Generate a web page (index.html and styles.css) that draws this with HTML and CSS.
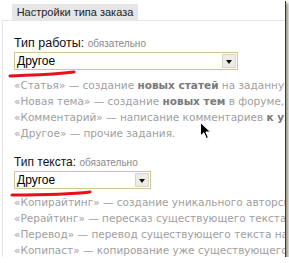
FILE: index.html
```html
<!DOCTYPE html>
<html lang="ru">
<head>
    <meta charset="UTF-8">
    <title>Настройки типа заказа</title>
    <link rel="stylesheet" href="styles.css">
</head>
<body>
    <div class="frame">
        <div class="tabs">
            <div class="tab">Настройки типа заказа</div>
        </div>
        <div class="panel">
            <div class="field">
                <label class="label">Тип работы: <span class="req">обязательно</span></label>
                <div class="select wide">
                    <span class="value">Другое</span>
                    <span class="arrow"></span>
                </div>
                <div class="help">
                    <div>«Статья» — создание <b>новых статей</b> на заданную тему по ключевым словам</div>
                    <div>«Новая тема» — создание <b>новых тем</b> в форуме, блоге</div>
                    <div>«Комментарий» — написание комментариев <b>к уже существующим</b> темам</div>
                    <div>«Другое» — прочие задания.</div>
                </div>
            </div>
            <div class="field second">
                <label class="label small">Тип текста: <span class="req">обязательно</span></label>
                <div class="select narrow">
                    <span class="value">Другое</span>
                    <span class="arrow"></span>
                </div>
                <div class="help tight">
                    <div>«Копирайтинг» — создание уникального авторского текста</div>
                    <div>«Рерайтинг» — пересказ существующего текста своими словами</div>
                    <div>«Перевод» — перевод существующего текста на другой язык</div>
                    <div>«Копипаст» — копирование уже существующего текста</div>
                </div>
            </div>
        </div>

        <!-- hand drawn marks over the screenshot -->
        <svg class="mark mark-1" width="70" height="8" viewBox="0 0 70 8">
            <path d="M2 6 C 20 5, 40 5, 66 2" stroke="#e8101a" stroke-width="3" fill="none" stroke-linecap="round"/>
        </svg>
        <svg class="mark mark-2" width="84" height="8" viewBox="0 0 84 8">
            <path d="M2 5 C 25 5, 55 5, 80 2" stroke="#e8101a" stroke-width="3" fill="none" stroke-linecap="round"/>
        </svg>
        <svg class="cursor" width="12" height="18" viewBox="0 0 12 18">
            <path d="M0.5 0.5 L0.5 14 L3.8 10.8 L6.4 16.5 L8.4 15.6 L5.9 10 L10.5 10 Z" fill="#000" stroke="#fff" stroke-width="1"/>
        </svg>
    </div>
</body>
</html>
```

FILE: styles.css
```css
body {
    margin: 0;
    background: #fff;
    font-family: 'Liberation Sans', Arial, sans-serif;
}
.frame {
    position: relative;
    width: 285px;
    height: 257px;
    background: #fff;
    overflow: hidden;
    box-shadow: 1px 1px 0 #3a3a3a, 3px 3px 3px rgba(60, 60, 30, 0.6);
}
.tabs {
    display: flex;
    padding: 4px 0 0 12px;
}
.tab {
    width: 126px;
    height: 16px;
    line-height: 16px;
    background: #e6e6e6;
    color: #222;
    font-size: 11px;
    text-align: center;
}
.panel {
    margin-left: 2px;
    border-top: 1px solid #e6e6e6;
    border-left: 1px solid #e6e6e6;
    padding: 15px 0 0 11px;
    height: 240px;
}
.label {
    display: block;
    font-size: 12.5px;
    line-height: 14px;
    color: #111;
}
.label.small {
    font-size: 12px;
}
.req {
    font-size: 10px;
    color: #8a8a8a;
}
.select {
    display: flex;
    align-items: center;
    justify-content: space-between;
    height: 16px;
    margin-top: 1px;
    border: 1px solid #d2c59c;
    background: #fff;
    padding: 0 1px 0 2px;
}
.select.wide {
    width: 219px;
}
.select.narrow {
    width: 132px;
}
.value {
    font-size: 12px;
    color: #000;
}
.arrow {
    position: relative;
    width: 14px;
    height: 14px;
    background: #ecebe6;
    border: 1px solid #d8d6cc;
    box-sizing: border-box;
}
.arrow::after {
    content: "";
    position: absolute;
    left: 3px;
    top: 5px;
    border-left: 3px solid transparent;
    border-right: 3px solid transparent;
    border-top: 4px solid #111;
}
.help {
    margin-top: 7px;
    font-family: 'DejaVu Sans', Verdana, sans-serif;
    font-size: 10.5px;
    line-height: 16px;
    color: #a0a0a0;
    white-space: nowrap;
}
.help b {
    color: #7a7a7a;
}
.help.tight {
    margin-top: 5px;
}
.second {
    margin-top: 14px;
}
.mark {
    position: absolute;
}
.mark-1 {
    left: 8px;
    top: 70px;
}
.mark-2 {
    left: 10px;
    top: 190px;
}
.cursor {
    position: absolute;
    left: 200px;
    top: 122px;
}
```
